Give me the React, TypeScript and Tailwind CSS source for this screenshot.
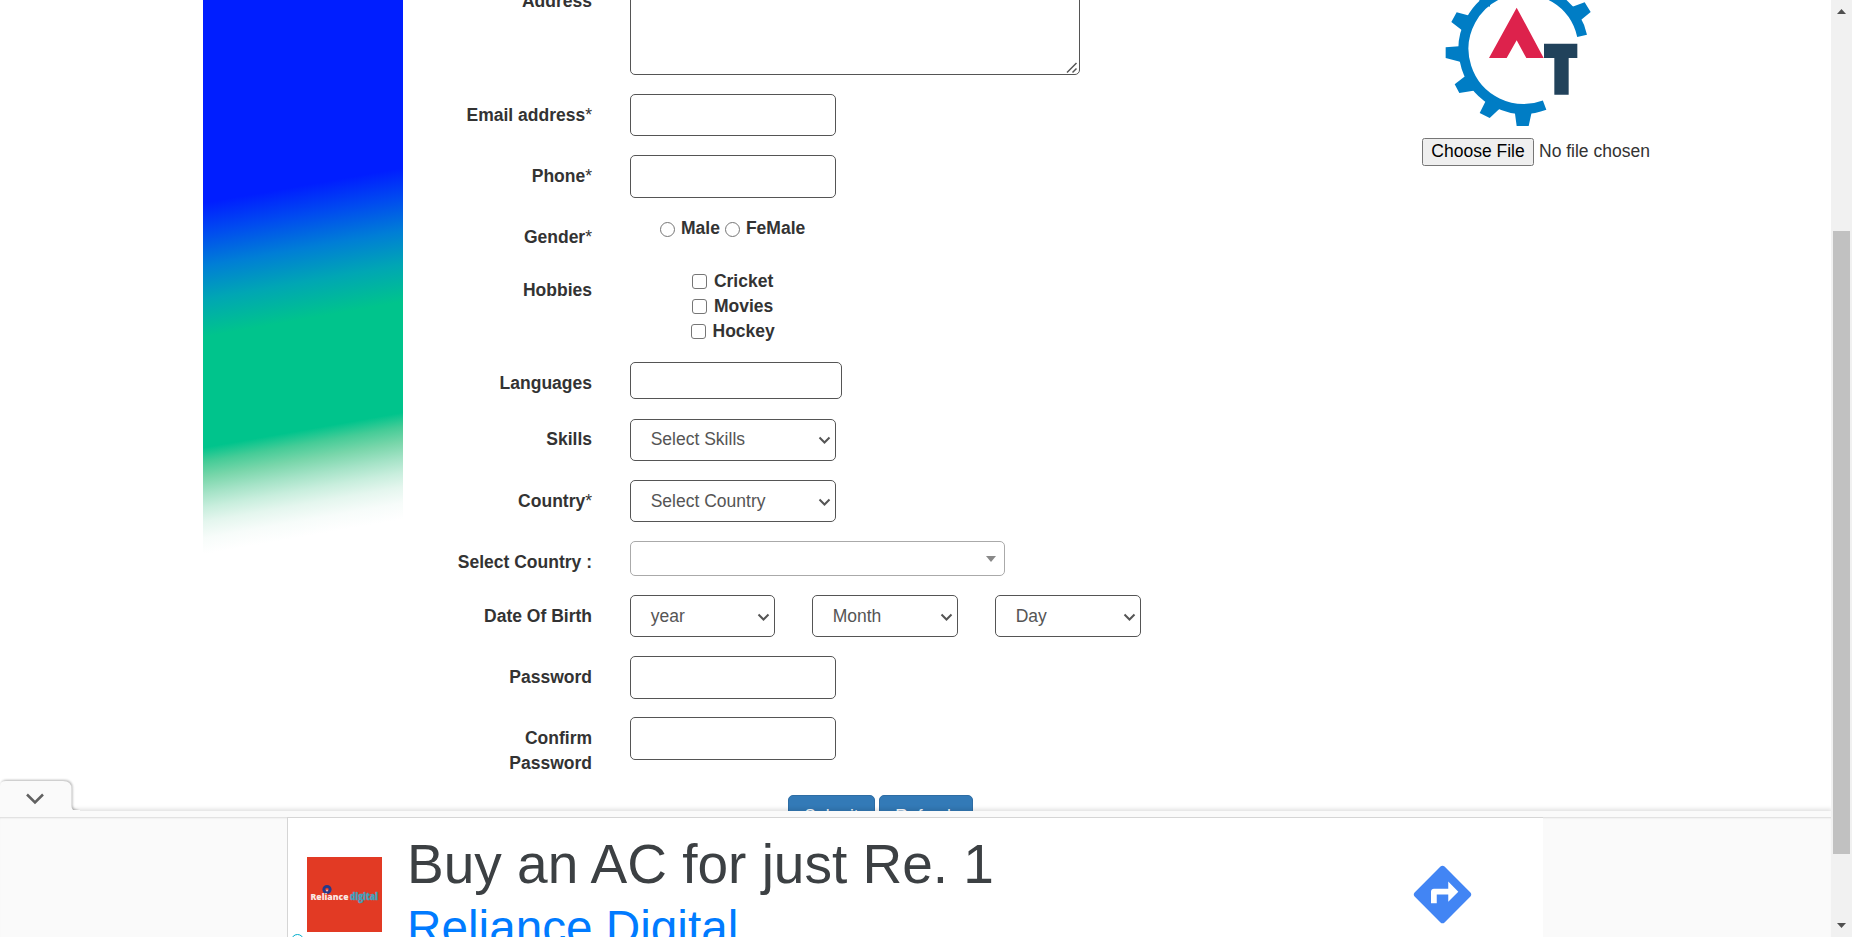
import React from "react";

function Row({ label, star, className, children }: { label: string; star?: boolean; className: string; children?: React.ReactNode }) {
  return (
    <div className={`flex shrink-0 items-start ${className}`}>
      <label className="w-[144px] shrink-0 pt-[8.75px] text-right font-bold leading-[25px]">
        {label}
        {star && <span className="font-normal">*</span>}
      </label>
      <div className="ml-[38px] flex">{children}</div>
    </div>
  );
}

function Picker({ text, className }: { text: string; className: string }) {
  return (
    <div className={`flex items-center justify-between rounded-[5px] border border-[#555] bg-white pl-[19.7px] pr-[4.5px] text-[#555] ${className}`}>
      <span className="leading-[25px]">{text}</span>
      <svg width="13" height="9" viewBox="0 0 13 9" className="mt-0.5 shrink-0">
        <path d="M1.5 1.5 6.5 6.5 11.5 1.5" fill="none" stroke="#555" strokeWidth="2" />
      </svg>
    </div>
  );
}

function Box({ className }: { className: string }) {
  return <input className={`block rounded-[5px] border border-[#555] bg-white ${className}`} />;
}

function Check({ text, className }: { text: string; className: string }) {
  return (
    <label className={`flex h-[25px] items-center font-bold leading-[25px] ${className}`}>
      <span className="mr-[6.5px] size-[15px] rounded-[3px] border border-[#767676] bg-white" />
      {text}
    </label>
  );
}

function Radio({ text }: { text: string }) {
  return (
    <label className="flex h-[25px] items-center font-bold leading-[25px]">
      <span className="mr-[6px] mt-0.5 size-[15px] rounded-full border border-[#767676] bg-white" />
      {text}
    </label>
  );
}

function GearLogo() {
  return (
    <svg width="160" height="128" viewBox="0 0 480 384" className="ml-[18px] block shrink-0">
      <path d="M313.800 315.300A180 180 0 1 1 426.300 107.700" fill="none" stroke="#007dc5" strokeWidth="30" />
      <g fill="#007dc5">
        <path d="M375 30 385 25 434 7 452 36 420 62 410 75Z" />
        <path d="M105 50 92 48 50 37 34 66 68 92 80 100Z" />
        <path d="M70 138 57 139 17 142 17 174 60 185 75 185Z" />
        <path d="M85 222 76 228 44 253 58 279 100 272 112 270Z" />
        <path d="M142 295 136 305 119 339 149 354 177 328 185 318Z" />
        <path d="M222 320 225 341 230 378 266 378 274 341 278 320Z" />
        <path d="M110 -20 122 11 150 20 150 -20Z" />
      </g>
      <path d="M230 23 311 174H259L230 121 200 174H147Z" fill="#dd224c" />
      <path d="M312 131H412V174H386V284H343V174H312Z" fill="#21425b" />
    </svg>
  );
}

function AdPanel() {
  return (
    <div className="absolute bottom-0 left-0 flex w-[1831px] flex-col [clip-path:inset(-20px_0_0_0)]">
      <div className="relative z-10 -mb-px h-[32px] w-[80px]">
        <svg width="80" height="32" viewBox="0 0 80 32" className="block overflow-visible">
          <path d="M0 6Q0 1 6 1H63Q71.500 1 71.500 9V26Q71.500 31 77 31V33H0Z" fill="#fafafa" className="drop-shadow-[1px_-1px_1px_rgba(0,0,0,0.28)]" />
          <rect x="0" y="30" width="80" height="7" fill="#fafafa" />
          <path d="M27 14.500 35 22.500 43 14.500" fill="none" stroke="#616161" strokeWidth="2.500" />
        </svg>
      </div>
      <div className="h-1.5 shrink-0 bg-[#fafafa] shadow-[0_-1px_4px_1px_rgba(0,0,0,0.12)]" />
      <div className="flex h-[120px] shrink-0 overflow-hidden bg-[#fafafa] shadow-[inset_0_2px_2px_-1px_rgba(0,0,0,0.13)]">
        <div className="ml-[287px] flex w-[1256px] items-start overflow-hidden border-l border-t border-[#d5d5d5] bg-white">
          <div className="flex w-[122px] shrink-0 flex-col">
            <div className="ml-[19px] mt-[39px] flex size-[75px] items-center justify-center bg-[#e23a24]">
              <svg width="75" height="75" viewBox="0 0 75 75">
                <circle cx="20" cy="32.500" r="3.200" fill="#e23a24" stroke="#243a8c" strokeWidth="2.800" />
                <circle cx="20" cy="33.500" r="1" fill="#f5b9b0" />
                <text x="3.500" y="42.500" fontFamily="Open Sans, sans-serif" fontWeight="800" fontSize="9.500" fill="#fbe9e4" textLength="38" lengthAdjust="spacingAndGlyphs">Reliance</text>
                <text x="43" y="42.500" fontFamily="Open Sans, sans-serif" fontWeight="800" fontSize="10" fill="#32a5c6" stroke="#5f9bb0" strokeWidth="0.500" textLength="28" lengthAdjust="spacingAndGlyphs">digital</text>
              </svg>
            </div>
            <div className="ml-[3px] mt-[2px] size-[13px] shrink-0 rounded-full border-[1.500px] border-[#00aecd]" />
          </div>
          <div className="w-[1000px] shrink-0 whitespace-nowrap">
            <div className="ml-[-3px] mt-[14px] text-[55px] leading-[64px] text-[#3c4043]">Buy an AC for just Re. 1</div>
            <div className="ml-[-3px] text-[47.700px] leading-[64px] text-[#007bff]">Reliance Digital</div>
          </div>
          <svg width="69" height="69" viewBox="0 0 24 24" className="ml-[-2px] mt-[42px] shrink-0" fill="#4285f4">
            <path d="M21.710 11.290l-9-9c-.390-.390-1.020-.390-1.410 0l-9 9c-.390.390-.390 1.020 0 1.410l9 9c.390.390 1.020.390 1.410 0l9-9c.390-.380.390-1.010 0-1.410zM14 14.500V12h-4v3H8v-4c0-.550.450-1 1-1h5V7.500l3.500 3.500-3.500 3.500z" />
          </svg>
        </div>
      </div>
    </div>
  );
}

function Scrollbar() {
  return (
    <div className="flex h-[937px] w-[21px] shrink-0 flex-col items-center bg-[#f1f1f1]">
      <svg width="9" height="5" viewBox="0 0 9 5" className="mt-[9px] shrink-0">
        <path d="M0 5 4.500 0 9 5Z" fill="#505050" />
      </svg>
      <div className="mt-[217px] h-[623px] w-[17px] shrink-0 bg-[#c1c1c1]" />
      <svg width="9" height="5" viewBox="0 0 9 5" className="mt-[69px] shrink-0">
        <path d="M0 0 4.500 5 9 0Z" fill="#505050" />
      </svg>
    </div>
  );
}

export default function App() {
  return (
    <div className="relative flex h-[937px] w-[1852px] overflow-hidden bg-white font-['Liberation_Sans',Arial,sans-serif] text-[17.5px] text-[#333]">
      <main className="flex h-[937px] w-[1831px] shrink-0 items-start overflow-hidden">
        <div className="ml-[203px] h-[560px] w-[200px] shrink-0 bg-[linear-gradient(170deg,#001eff_200px,#004af0_229px,#007ed6_262px,#00a6b4_295px,#00c48c_332px,#00c48c_441px,#45cc97_455px,#78d6aa_470px,#a5e3c7_486px,#c8eedd_500px,#e4f6ee_514px,#f7fcfa_530px,#ffffff_546px)]" />
        <form className="-mt-5 ml-[45px] flex w-[974px] shrink-0 flex-col">
          <Row label="Address" className="h-[113.75px]">
            <div className="relative">
              <textarea className="block h-[95px] w-[450px] resize-none rounded-[5px] border border-[#555] bg-white" />
              <svg width="12" height="12" viewBox="0 0 12 12" className="absolute bottom-[1px] right-[2px]">
                <path d="M1 10.500 10.500 1M6.500 10.500 10.500 6.500" stroke="#555" strokeWidth="1.500" />
              </svg>
            </div>
          </Row>
          <Row label="Email address" star className="h-[61.25px]">
            <Box className="h-[42.5px] w-[206px]" />
          </Row>
          <Row label="Phone" star className="h-[61.25px]">
            <Box className="h-[42.5px] w-[206px]" />
          </Row>
          <Row label="Gender" star className="h-[52.5px]">
            <div className="ml-[30px] flex gap-[5px]">
              <Radio text="Male" />
              <Radio text="FeMale" />
            </div>
          </Row>
          <Row label="Hobbies" className="h-[93.5px]">
            <div className="ml-[61px] flex flex-col">
              <Check text="Cricket" className="ml-[1.4px]" />
              <Check text="Movies" className="ml-[1.4px]" />
              <Check text="Hockey" className="" />
            </div>
          </Row>
          <Row label="Languages" className="h-[56.25px]">
            <Box className="h-[37px] w-[212px]" />
          </Row>
          <Row label="Skills" className="h-[61.25px]">
            <Picker text="Select Skills" className="h-[42.5px] w-[206px]" />
          </Row>
          <Row label="Country" star className="h-[61.25px]">
            <Picker text="Select Country" className="h-[42.5px] w-[206px]" />
          </Row>
          <Row label="Select Country :" className="h-[53.75px]">
            <div className="flex h-[35px] w-[375px] items-center justify-end rounded-[5px] border border-[#aaa] bg-white pr-2">
              <svg width="10" height="6" viewBox="0 0 10 6">
                <path d="M0 0H10L5 6Z" fill="#888" />
              </svg>
            </div>
          </Row>
          <Row label="Date Of Birth" className="h-[61.25px]">
            <div className="flex gap-[37px]">
              <Picker text="year" className="h-[42.5px] w-[145px]" />
              <Picker text="Month" className="h-[42.5px] w-[146px]" />
              <Picker text="Day" className="h-[42.5px] w-[146px]" />
            </div>
          </Row>
          <Row label="Password" className="h-[61.25px]">
            <Box className="h-[42.5px] w-[206px]" />
          </Row>
          <Row label="Confirm Password" className="h-[77.5px]">
            <Box className="h-[42.5px] w-[206px]" />
          </Row>
          <div className="ml-[340px] flex shrink-0 gap-1 text-white">
            <button type="button" className="h-[42.5px] w-[87px] rounded-[5px] border border-[#2e6da4] bg-[#337ab7]">Submit</button>
            <button type="button" className="h-[42.5px] w-[94px] rounded-[5px] border border-[#2e6da4] bg-[#337ab7]">Refresh</button>
          </div>
        </form>
        <aside className="flex w-[300px] shrink-0 flex-col">
          <GearLogo />
          <div className="mt-[10px] flex items-center leading-[25px]">
            <button type="button" className="h-7 w-[112px] rounded-[2.5px] border border-[#767676] bg-[#efefef] pb-0.5 leading-[24px] text-black">Choose File</button>
            <span className="ml-[5px] pb-0.5">No file chosen</span>
          </div>
        </aside>
      </main>
      <Scrollbar />
      <AdPanel />
    </div>
  );
}
